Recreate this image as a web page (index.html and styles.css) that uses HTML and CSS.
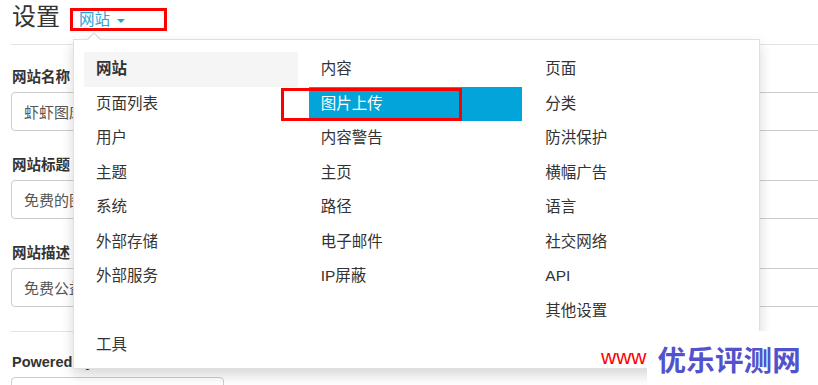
FILE: index.html
```html
<!DOCTYPE html>
<html lang="zh-CN">

<head>
    <meta charset="UTF-8">
    <meta name="viewport" content="width=device-width, initial-scale=1.0">
    <title>设置 - 网站</title>
    <link rel="stylesheet" href="styles.css">
</head>

<body>
    <div class="page">
        <!-- Header -->
        <div class="page-header">
            <h1 class="title">设置</h1>
            <span class="crumb">网站 <span class="caret"></span></span>
        </div>

        <form class="settings">
            <div class="field">
                <label>网站名称</label>
                <input class="input" type="text" value="虾虾图床 - 免费图片上传">
            </div>
            <div class="field">
                <label>网站标题</label>
                <input class="input" type="text" value="免费的图床网站">
            </div>
            <div class="field">
                <label>网站描述</label>
                <input class="input" type="text" value="免费公益图床，支持多种格式">
            </div>
            <hr class="divider">
            <div class="field">
                <label>Powered by</label>
                <input class="input input-short" type="text">
            </div>
        </form>

        <!-- Menu -->
        <nav class="menu">
            <ul class="menu-col">
                <li class="menu-head">网站</li>
                <li>页面列表</li>
                <li>用户</li>
                <li>主题</li>
                <li>系统</li>
                <li>外部存储</li>
                <li>外部服务</li>
                <li class="menu-gap"></li>
                <li>工具</li>
            </ul>
            <ul class="menu-col">
                <li>内容</li>
                <li class="active">图片上传</li>
                <li>内容警告</li>
                <li>主页</li>
                <li>路径</li>
                <li>电子邮件</li>
                <li>IP屏蔽</li>
            </ul>
            <ul class="menu-col">
                <li>页面</li>
                <li>分类</li>
                <li>防洪保护</li>
                <li>横幅广告</li>
                <li>语言</li>
                <li>社交网络</li>
                <li>API</li>
                <li>其他设置</li>
            </ul>
        </nav>

        <!-- Annotation boxes -->
        <span class="mark mark-crumb"></span>
        <span class="mark mark-item"></span>

        <div class="watermark">
            <span class="www">www</span>
            <span class="brand">优乐评测网</span>
        </div>
    </div>
</body>

</html>
```

FILE: styles.css
```css
body {
    margin: 0;
    font-family: "Liberation Sans", "Noto Sans CJK SC", sans-serif;
    color: #333333;
    background-color: #ffffff;
    overflow: hidden;
}

.page {
    position: relative;
    height: 385px;
    padding-left: 11px;
    overflow: hidden;
}

/* Header */
.page-header {
    display: flex;
    align-items: baseline;
    height: 44px;
    border-bottom: 1px solid #e5e5e5;
}

.title {
    margin: 0;
    font-size: 24px;
    font-weight: normal;
    line-height: 34px;
    color: #333333;
    padding-left: 1px;
}

.crumb {
    margin-left: 19px;
    font-size: 15.5px;
    color: #27a3da;
}

.caret {
    display: inline-block;
    width: 0;
    height: 0;
    margin-left: 3px;
    vertical-align: middle;
    border-top: 4px solid #27a3da;
    border-left: 4px solid transparent;
    border-right: 4px solid transparent;
}

/* Form */
.settings {
    padding-top: 22px;
}

.field label {
    display: block;
    font-size: 14.5px;
    font-weight: bold;
    line-height: 20px;
    margin-bottom: 5px;
    padding-left: 1px;
}

.input {
    display: block;
    box-sizing: border-box;
    width: 900px;
    height: 39px;
    margin: 0 0 24px;
    padding: 0 12px;
    font-family: inherit;
    font-size: 15px;
    color: #555555;
    border: 1px solid #cccccc;
    border-radius: 4px;
    background-color: #ffffff;
}

.input-short {
    width: 213px;
}

.divider {
    margin: 0 0 20px -1px;
    border: 0;
    border-top: 1px solid #e5e5e5;
}

/* Menu */
.menu {
    position: absolute;
    top: 39px;
    left: 73px;
    box-sizing: border-box;
    width: 687px;
    height: 330px;
    padding: 12px 12px 0 10px;
    display: flex;
    gap: 11px;
    background-color: #ffffff;
    border: 1px solid rgba(0, 0, 0, 0.12);
    box-shadow: 0 6px 12px rgba(0, 0, 0, 0.16);
}

.menu::before,
.menu::after {
    content: "";
    position: absolute;
    left: 13px;
    width: 0;
    height: 0;
    border-left: 7px solid transparent;
    border-right: 7px solid transparent;
}

.menu::before {
    top: -8px;
    border-bottom: 7px solid rgba(0, 0, 0, 0.12);
}

.menu::after {
    top: -6px;
    left: 14px;
    border-left-width: 6px;
    border-right-width: 6px;
    border-bottom: 6px solid #ffffff;
}

.menu-col {
    list-style: none;
    margin: 0;
    padding: 0;
    width: 214px;
}

.menu-col li {
    height: 34.5px;
    line-height: 34.5px;
    padding-left: 12px;
    font-size: 15.5px;
    color: #333333;
    white-space: nowrap;
}

.menu-col .menu-head {
    font-weight: bold;
    background-color: #f5f5f5;
}

.menu-col .active {
    color: #ffffff;
    background-color: #03a4d9;
}

/* Annotations */
.mark {
    position: absolute;
    box-sizing: border-box;
    border: 3px solid #ff0000;
}

.mark-crumb {
    top: 8px;
    left: 70px;
    width: 97px;
    height: 23px;
}

.mark-item {
    top: 88px;
    left: 281px;
    width: 181px;
    height: 33px;
}

/* Watermark */
.watermark {
    position: absolute;
    left: 601px;
    top: 331px;
    right: 0;
    bottom: 0;
    display: flex;
    align-items: stretch;
}

.www {
    padding-top: 14px;
    font-size: 21px;
    color: #ff0000;
    white-space: nowrap;
}

.brand {
    flex: 1;
    display: flex;
    align-items: center;
    padding-left: 11px;
    font-size: 28.5px;
    font-weight: bold;
    letter-spacing: 0.2px;
    color: #5252cc;
    background-color: #ffffff;
}
```
